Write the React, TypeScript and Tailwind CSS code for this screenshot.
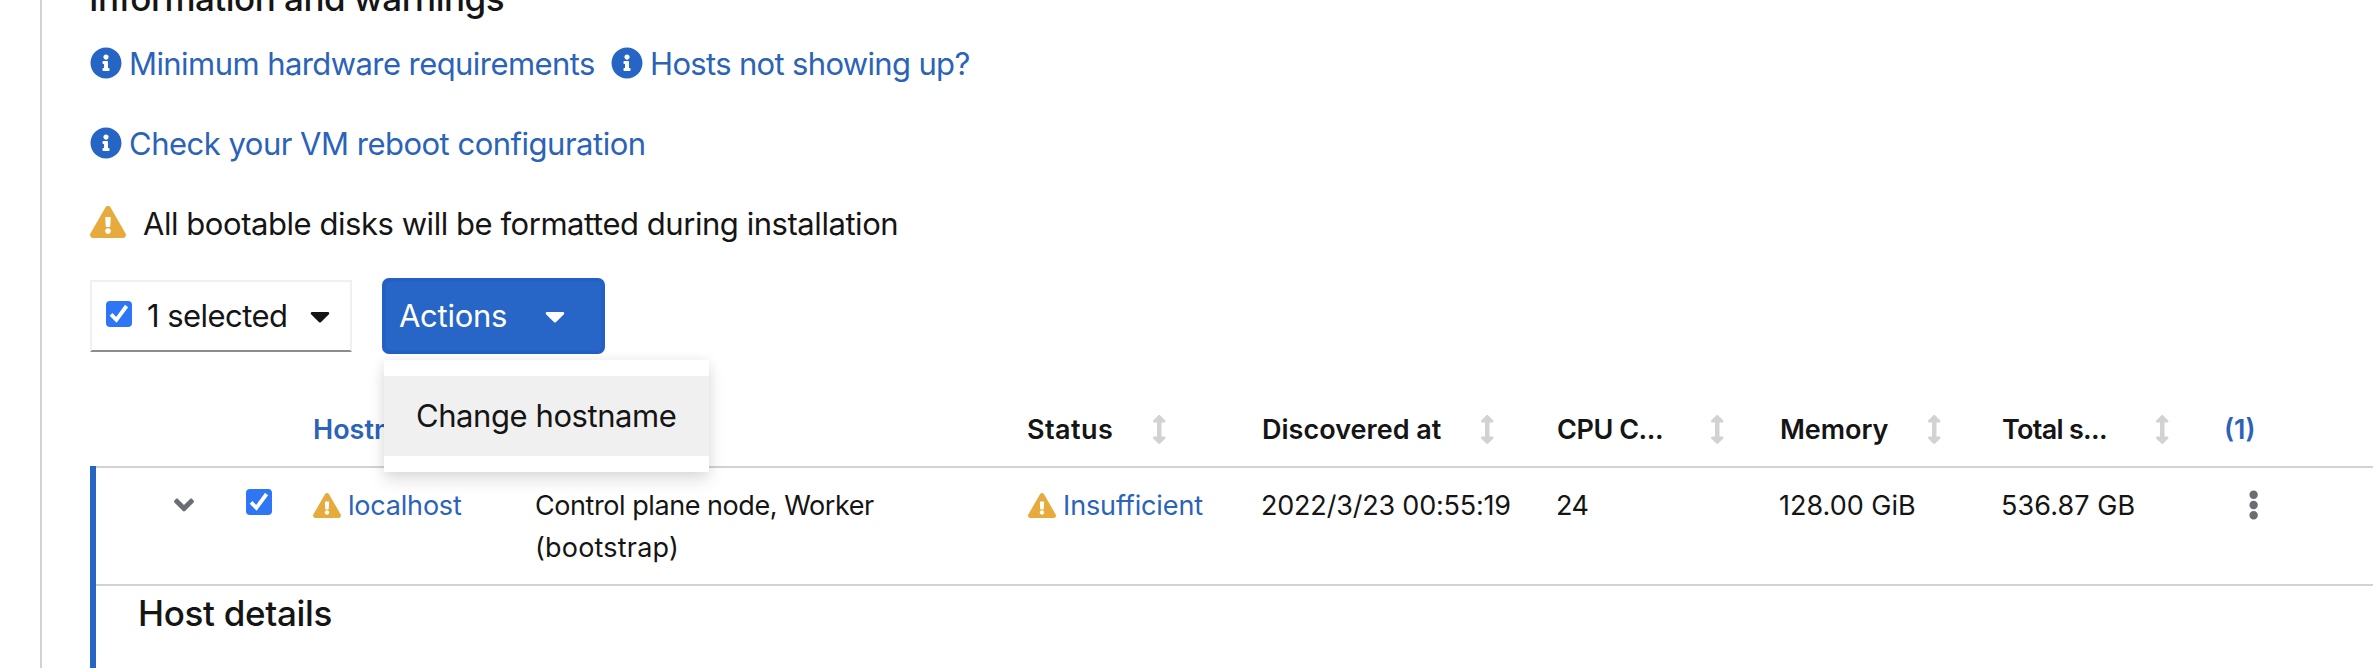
import type { ReactNode } from "react";
import {
  FaAngleDown,
  FaArrowsAltV,
  FaCaretDown,
  FaEllipsisV,
  FaExclamationTriangle,
  FaInfoCircle,
} from "react-icons/fa";

const COLUMNS =
  "grid grid-cols-[156px_66px_223px_491px_235px_295px_223px_222px_223px_149px]";

function Checkbox({ className }: { className: string }) {
  return (
    <span
      role="checkbox"
      aria-checked="true"
      className={`flex size-[26px] shrink-0 items-center justify-center rounded-[4px] bg-[#2e76f5] ${className}`}
    >
      <svg viewBox="0 0 26 26" className="size-[26px]" fill="none" stroke="#fff" strokeWidth="3.8">
        <path d="M5 13.4 L10.4 18.8 L20.6 5" />
      </svg>
    </span>
  );
}

function InfoLink({ children, className }: { children: ReactNode; className: string }) {
  return (
    <a className="flex items-center text-[#2b63b8]">
      <FaInfoCircle className="size-[32px] shrink-0 text-[#2765c5]" />
      <span className={`mt-[2px] ml-[7px] ${className}`}>{children}</span>
    </a>
  );
}

function SortHeader({ label, className }: { label: string; className: string }) {
  return (
    <div className="flex items-center">
      <span className={`shrink-0 pt-[2px] pl-px ${className}`}>{label}</span>
      <FaArrowsAltV className="-ml-px h-[29px] w-[14.5px] shrink-0 text-[#d2d2d2]" />
    </div>
  );
}

export default function App() {
  return (
    <div className="flex h-[668px] w-[2378px] overflow-hidden bg-white pl-[40px] font-['Inter',sans-serif] text-[31px] whitespace-nowrap text-[#151515]">
      <main className="w-[2338px] border-l-2 border-[#d2d2d2] pl-[48px]">
        <h2 className="-mt-[25px] -ml-px text-[35px] leading-[46px] font-medium tracking-[-0.52px]">
          Information and warnings
        </h2>

        <div className="mt-[2px] flex h-[80px] items-center gap-[16px]">
          <InfoLink className="w-[466px] tracking-[-0.57px]">Minimum hardware requirements</InfoLink>
          <InfoLink className="tracking-[-0.66px]">Hosts not showing up?</InfoLink>
        </div>
        <div className="flex h-[80px] items-center">
          <InfoLink className="tracking-[-0.5px]">Check your VM reboot configuration</InfoLink>
        </div>
        <div className="flex h-[80px] items-center">
          <FaExclamationTriangle className="-mt-[2px] h-[32px] w-[36px] shrink-0 text-[#e6ab3c]" />
          <span className="mt-[2px] ml-[17px] tracking-[-0.45px]">
            All bootable disks will be formatted during installation
          </span>
        </div>

        <div className="mt-[15px] flex h-[76px] items-center">
          <div className="flex h-[72px] w-[262px] items-center border-2 border-[#f0f0f0] border-b-[#8a8d90] pl-[14px]">
            <Checkbox className="-mt-[4px]" />
            <span className="ml-[15px] w-[163px] tracking-[-0.55px]">1 selected</span>
            <FaCaretDown className="h-[32px] w-[20px]" />
          </div>

          <div className="relative ml-[30px]">
            <button className="flex h-[76px] w-[223px] items-center rounded-[7px] border-4 border-[#235fc4] bg-[#2766c6] pl-[13px] text-white">
              <span className="w-[146px] text-left tracking-[-0.28px]">Actions</span>
              <FaCaretDown className="h-[32px] w-[20px]" />
            </button>
            <div className="absolute top-[82px] left-[2px] z-10 w-[325px] bg-white py-[16px] shadow-[0_8px_16px_rgba(3,3,3,0.12),0_0_12px_rgba(3,3,3,0.06)]">
              <div className="flex h-[80px] items-center bg-[#f0f0f0] pl-[32px] tracking-[-0.43px]">
                Change hostname
              </div>
            </div>
          </div>
        </div>

        <div className="mt-[38px] w-[2283px] text-[27px] leading-[42px]">
          <div className={`${COLUMNS} h-[74px] items-center font-semibold`}>
            <span />
            <span />
            <span className="pt-[2px] pl-px text-[#2b63b8]">Hostname</span>
            <span />
            <SortHeader label="Status" className="w-[127px] tracking-[0.45px]" />
            <SortHeader label="Discovered at" className="w-[220px] tracking-[0.02px]" />
            <SortHeader label="CPU C..." className="w-[155px] tracking-[-0.45px]" />
            <SortHeader label="Memory" className="w-[149px] tracking-[-0.05px]" />
            <SortHeader label="Total s..." className="w-[155px] tracking-[-0.7px]" />
            <span className="pt-[2px] text-[#2b63b8]">(1)</span>
          </div>

          <div className="h-[210px] border-l-[6px] border-[#2765c5]">
            <div className="h-[120px] border-y-2 border-[#d2d2d2]">
              <div className={`${COLUMNS} -ml-[6px] pt-[17px]`}>
                <div className="-mt-px flex h-[42px] items-center pl-[84px]">
                  <FaAngleDown className="h-[32px] w-[20px] text-[#6a6e73]" />
                </div>
                <div className="-mt-px flex h-[42px] items-center">
                  <Checkbox className="-mt-[6px]" />
                </div>
                <div className="flex h-[42px] items-center">
                  <FaExclamationTriangle className="-mt-[2px] ml-px h-[25px] w-[28px] shrink-0 text-[#e6ab3c]" />
                  <a className="ml-[7px] tracking-[-0.2px] text-[#2b63b8]">localhost</a>
                </div>
                <div>
                  <div className="tracking-[-0.44px]">Control plane node, Worker</div>
                  <div className="tracking-[0.2px]">(bootstrap)</div>
                </div>
                <div className="flex h-[42px] items-center">
                  <FaExclamationTriangle className="-mt-[2px] ml-[2px] h-[25px] w-[28px] shrink-0 text-[#e6ab3c]" />
                  <a className="ml-[7px] tracking-[-0.12px] text-[#2b63b8]">Insufficient</a>
                </div>
                <span className="tracking-[-0.2px]">2022/3/23 00:55:19</span>
                <span className="tracking-[-0.5px]">24</span>
                <span>128.00 GiB</span>
                <span className="tracking-[0.1px]">536.87 GB</span>
                <div className="-mt-px flex h-[42px] items-center pl-[24px]">
                  <FaEllipsisV className="h-[30px] w-[11.25px] text-[#6a6e73]" />
                </div>
              </div>
            </div>
            <h3 className="mt-[4px] pl-[42px] text-[35px] leading-[46px] font-medium tracking-[-0.32px]">
              Host details
            </h3>
          </div>
        </div>
      </main>
    </div>
  );
}
